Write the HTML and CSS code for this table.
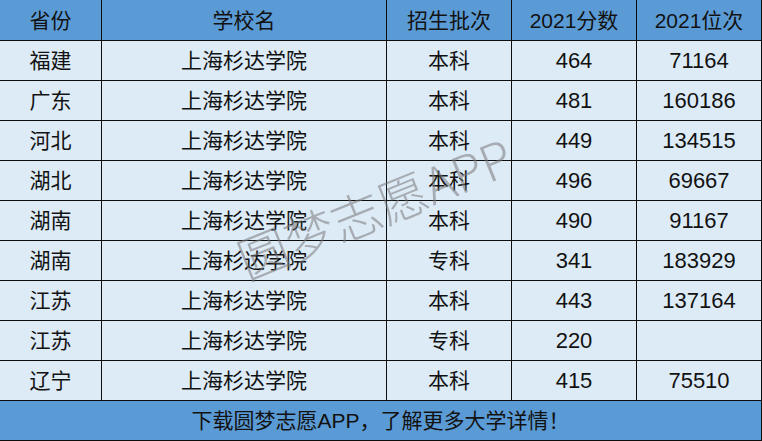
FILE: index.html
```html
<!DOCTYPE html>
<html lang="zh">
<head>
<meta charset="utf-8">
<link rel="stylesheet" href="styles.css">
</head>
<body>
<div class="page">
  <div class="grid">
    <div class="cell head">省份</div>
    <div class="cell head">学校名</div>
    <div class="cell head">招生批次</div>
    <div class="cell head">2021分数</div>
    <div class="cell head">2021位次</div>

    <div class="cell">福建</div><div class="cell">上海杉达学院</div><div class="cell">本科</div><div class="cell n">464</div><div class="cell n">71164</div>
    <div class="cell">广东</div><div class="cell">上海杉达学院</div><div class="cell">本科</div><div class="cell n">481</div><div class="cell n">160186</div>
    <div class="cell">河北</div><div class="cell">上海杉达学院</div><div class="cell">本科</div><div class="cell n">449</div><div class="cell n">134515</div>
    <div class="cell">湖北</div><div class="cell">上海杉达学院</div><div class="cell">本科</div><div class="cell n">496</div><div class="cell n">69667</div>
    <div class="cell">湖南</div><div class="cell">上海杉达学院</div><div class="cell">本科</div><div class="cell n">490</div><div class="cell n">91167</div>
    <div class="cell">湖南</div><div class="cell">上海杉达学院</div><div class="cell">专科</div><div class="cell n">341</div><div class="cell n">183929</div>
    <div class="cell">江苏</div><div class="cell">上海杉达学院</div><div class="cell">本科</div><div class="cell n">443</div><div class="cell n">137164</div>
    <div class="cell">江苏</div><div class="cell">上海杉达学院</div><div class="cell">专科</div><div class="cell n">220</div><div class="cell n"></div>
    <div class="cell">辽宁</div><div class="cell">上海杉达学院</div><div class="cell">本科</div><div class="cell n">415</div><div class="cell n">75510</div>

    <div class="cell foot">下载圆梦志愿APP，了解更多大学详情！</div>
  </div>
  <div class="watermark">圆梦志愿APP</div>
</div>
</body>
</html>
```
FILE: styles.css
```css
html, body {
  margin: 0;
  padding: 0;
  background: #ffffff;
}
.page {
  position: relative;
  width: 762px;
  height: 441px;
  overflow: hidden;
}
.grid {
  display: grid;
  grid-template-columns: 101px 284px 124px 124px 124px;
  grid-template-rows: 40px repeat(10, 39px);
  gap: 1px;
  padding: 0 1px 1px 0;
  background: #0d0d0d;
  width: 762px;
  box-sizing: border-box;
  font-family: "Liberation Sans", "Noto Sans CJK SC", sans-serif;
  font-size: 21px;
  color: #121212;
}
.cell {
  background: #ddebf7;
  display: flex;
  align-items: center;
  justify-content: center;
  line-height: 1;
}
.n {
  font-size: 22px;
}
.head {
  background: #5b9bd5;
}
.foot {
  grid-column: 1 / -1;
  background: #5b9bd5;
}
.watermark {
  position: absolute;
  left: 374px;
  top: 206px;
  transform: translate(-50%, -50%) rotate(-22deg);
  font-family: "Noto Sans CJK SC", sans-serif;
  font-weight: 300;
  font-size: 50px;
  color: rgba(120, 120, 120, 0.55);
  white-space: nowrap;
  pointer-events: none;
}
```
